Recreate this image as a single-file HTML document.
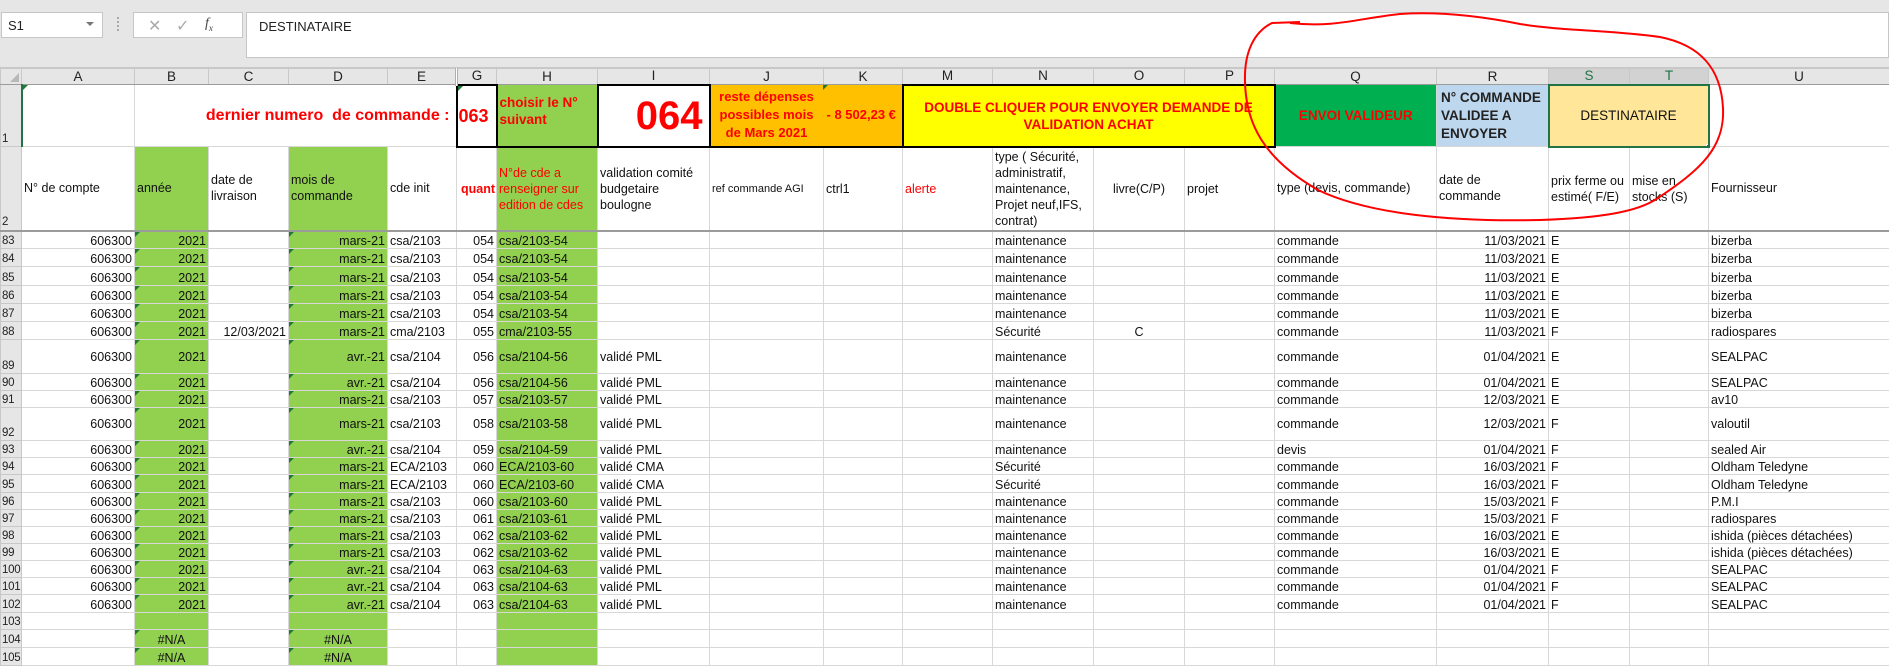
<!DOCTYPE html>
<html><head><meta charset="utf-8">
<style>
*{box-sizing:border-box}
body{margin:0;width:1889px;height:660px;overflow:hidden;background:#fff;font-family:"Liberation Sans",Arial,sans-serif;position:relative}
#top{position:absolute;left:0;top:0;width:1889px;height:68px;background:#e6e6e6;border-bottom:1px solid #c8c8c8}
#nb{position:absolute;left:1px;top:12px;width:102px;height:26px;background:#fff;border:1px solid #c6c6c6;font-size:13px;padding:5px 6px;color:#222}
#nb span{position:absolute;right:8px;top:9px;width:0;height:0;border-left:4px solid transparent;border-right:4px solid transparent;border-top:4px solid #777}
#dots{position:absolute;left:117px;top:17px;width:2px;height:14px;border-left:2px dotted #aaa}
#btn{position:absolute;left:133px;top:12px;width:110px;height:26px;background:#fff;border:1px solid #c6c6c6;color:#aaa;font-size:16px}
#fx{position:absolute;left:246px;top:12px;right:0;height:46px;background:#fff;border:1px solid #c6c6c6;font-size:13px;padding:6px 12px;color:#222}
table{position:absolute;left:0;top:68px;border-collapse:collapse;table-layout:fixed;width:1889px}
td{border:1px solid #d8d8d8;padding:0 2px;font-size:12.5px;white-space:nowrap;overflow:hidden;vertical-align:bottom;color:#111;position:relative;line-height:14px}
tr.ch td{background:#e6e6e6;text-align:center;font-size:13.5px;color:#222;vertical-align:middle;border-color:#c8c8c8;border-bottom:1px solid #9b9b9b}
td.rh{background:#e6e6e6;color:#222;font-size:11.5px;padding:0 1px;border-color:#c8c8c8;letter-spacing:-0.3px}
.r{text-align:right}.c{text-align:center}
.g{background:#92d050}
.t::before{content:"";position:absolute;left:0;top:0;border-top:5px solid #1e7b34;border-right:5px solid transparent}
.red{color:#f00}
.b{font-weight:bold}
tr.h2 td{vertical-align:middle;white-space:normal;line-height:16px;border-bottom:2px solid #9b9b9b}
tr.h2 td.rh{vertical-align:bottom}
tr.m td{vertical-align:middle}
tr.m td.rh{vertical-align:bottom}
</style></head><body>
<div id="top">
<div id="nb">S1<span></span></div>
<div id="dots"></div>
<div id="btn"><span style="position:absolute;left:14px;top:3px">✕</span><span style="position:absolute;left:42px;top:3px">✓</span><span style="position:absolute;left:71px;top:3px;color:#444;font-family:'Liberation Serif',serif;font-style:italic;font-size:14px">f<sub style="font-size:9px">x</sub></span></div>
<div id="fx">DESTINATAIRE</div>
</div>
<table>
<colgroup><col style="width:21px"><col style="width:113px"><col style="width:74px"><col style="width:80px"><col style="width:99px"><col style="width:69px"><col style="width:40px"><col style="width:101px"><col style="width:112px"><col style="width:114px"><col style="width:79px"><col style="width:90px"><col style="width:101px"><col style="width:91px"><col style="width:90px"><col style="width:162px"><col style="width:112px"><col style="width:81px"><col style="width:79px"><col style="width:181px"></colgroup>
<tr class="ch" style="height:16px"><td style="position:relative"><span style="position:absolute;right:2px;bottom:2px;border-bottom:9px solid #b8b8b8;border-left:9px solid transparent"></span></td><td>A</td><td>B</td><td>C</td><td>D</td><td style="border-right:3px double #b0b0b0">E</td><td>G</td><td>H</td><td>I</td><td>J</td><td>K</td><td>M</td><td>N</td><td>O</td><td>P</td><td>Q</td><td>R</td><td style="background:#d2d2d2;color:#217346">S</td><td style="background:#d2d2d2;color:#217346">T</td><td>U</td></tr>
<tr style="height:62px"><td class="rh" style="border-right:2px solid #217346">1</td><td class="t"></td>
<td colspan="4" class="r red b" style="font-size:16px;vertical-align:middle;padding-right:6px;border-right:2px solid #000">dernier numero&nbsp; de commande :</td>
<td class="red b t" style="font-size:18px;vertical-align:middle;border:2px solid #000;padding:0 1px">063</td>
<td class="g red b" style="font-size:13.5px;white-space:normal;vertical-align:middle;line-height:17px;border-bottom:2px solid #000;padding:0 2px 8px">choisir le N° suivant</td>
<td class="r red b" style="font-size:40px;vertical-align:middle;border:2px solid #000;padding-right:6px">064</td>
<td colspan="2" class="red b" style="background:#ffc000;font-size:13px;border-bottom:2px solid #000;border-right:2px solid #000;line-height:18px"><div style="position:absolute;left:0;top:3px;width:112px;text-align:center">reste dépenses<br>possibles mois<br>de Mars 2021</div><div style="position:absolute;left:116px;top:21px">- 8 502,23 €</div><span style="position:absolute;left:112px;top:0;border-top:5px solid #1e7b34;border-right:5px solid transparent"></span></td>
<td colspan="4" class="red b c" style="background:#ffff00;font-size:13.5px;white-space:normal;vertical-align:middle;line-height:17px;border:2px solid #000;padding:0 10px">DOUBLE CLIQUER POUR ENVOYER DEMANDE DE VALIDATION ACHAT</td>
<td class="c red b" style="background:#00b050;font-size:13.5px;vertical-align:middle">ENVOI VALIDEUR</td>
<td class="b" style="background:#bdd7ee;font-size:13.5px;white-space:normal;vertical-align:middle;line-height:18px;color:#222;padding-left:4px">N° COMMANDE VALIDEE A ENVOYER</td>
<td colspan="2" class="c" style="background:#ffe699;font-size:13.5px;vertical-align:middle;border:2px solid #217346;color:#111">DESTINATAIRE<span style="position:absolute;right:-4px;bottom:-4px;width:6px;height:6px;background:#217346;border:1px solid #fff"></span></td>
<td></td></tr>
<tr class="h2" style="height:84px"><td class="rh">2</td><td>N° de compte</td><td class="g">année</td><td>date de<br>livraison</td><td class="g">mois de<br>commande</td><td>cde init</td><td class="red b r" style="padding:0 1px">quant</td><td class="g red">N°de cde a renseigner sur edition de cdes</td><td>validation comité budgetaire boulogne</td><td style="font-size:11px">ref commande AGI</td><td>ctrl1</td><td class="red">alerte</td><td>type ( Sécurité, administratif, maintenance, Projet neuf,IFS, contrat)</td><td class="c">livre(C/P)</td><td>projet</td><td>type (devis, commande)</td><td>date de<br>commande</td><td>prix ferme ou estimé( F/E)</td><td>mise en stocks (S)</td><td>Fournisseur</td></tr>
<tr style="height:18px"><td class="rh">83</td><td class="r">606300</td><td class="g r t">2021</td><td></td><td class="g r t">mars-21</td><td>csa/2103</td><td class="r">054</td><td class="g">csa/2103-54</td><td></td><td></td><td></td><td></td><td>maintenance</td><td></td><td></td><td>commande</td><td class="r">11/03/2021</td><td>E</td><td></td><td>bizerba</td></tr>
<tr style="height:18px"><td class="rh">84</td><td class="r">606300</td><td class="g r t">2021</td><td></td><td class="g r t">mars-21</td><td>csa/2103</td><td class="r">054</td><td class="g">csa/2103-54</td><td></td><td></td><td></td><td></td><td>maintenance</td><td></td><td></td><td>commande</td><td class="r">11/03/2021</td><td>E</td><td></td><td>bizerba</td></tr>
<tr style="height:19px"><td class="rh">85</td><td class="r">606300</td><td class="g r t">2021</td><td></td><td class="g r t">mars-21</td><td>csa/2103</td><td class="r">054</td><td class="g">csa/2103-54</td><td></td><td></td><td></td><td></td><td>maintenance</td><td></td><td></td><td>commande</td><td class="r">11/03/2021</td><td>E</td><td></td><td>bizerba</td></tr>
<tr style="height:18px"><td class="rh">86</td><td class="r">606300</td><td class="g r t">2021</td><td></td><td class="g r t">mars-21</td><td>csa/2103</td><td class="r">054</td><td class="g">csa/2103-54</td><td></td><td></td><td></td><td></td><td>maintenance</td><td></td><td></td><td>commande</td><td class="r">11/03/2021</td><td>E</td><td></td><td>bizerba</td></tr>
<tr style="height:18px"><td class="rh">87</td><td class="r">606300</td><td class="g r t">2021</td><td></td><td class="g r t">mars-21</td><td>csa/2103</td><td class="r">054</td><td class="g">csa/2103-54</td><td></td><td></td><td></td><td></td><td>maintenance</td><td></td><td></td><td>commande</td><td class="r">11/03/2021</td><td>E</td><td></td><td>bizerba</td></tr>
<tr style="height:18px"><td class="rh">88</td><td class="r">606300</td><td class="g r t">2021</td><td class="r">12/03/2021</td><td class="g r t">mars-21</td><td>cma/2103</td><td class="r">055</td><td class="g">cma/2103-55</td><td></td><td></td><td></td><td></td><td>Sécurité</td><td class="c">C</td><td></td><td>commande</td><td class="r">11/03/2021</td><td>F</td><td></td><td>radiospares</td></tr>
<tr class="m" style="height:34px"><td class="rh">89</td><td class="r">606300</td><td class="g r t">2021</td><td></td><td class="g r t">avr.-21</td><td>csa/2104</td><td class="r">056</td><td class="g">csa/2104-56</td><td>validé PML</td><td></td><td></td><td></td><td>maintenance</td><td></td><td></td><td>commande</td><td class="r">01/04/2021</td><td>E</td><td></td><td>SEALPAC</td></tr>
<tr style="height:17px"><td class="rh">90</td><td class="r">606300</td><td class="g r t">2021</td><td></td><td class="g r t">avr.-21</td><td>csa/2104</td><td class="r">056</td><td class="g">csa/2104-56</td><td>validé PML</td><td></td><td></td><td></td><td>maintenance</td><td></td><td></td><td>commande</td><td class="r">01/04/2021</td><td>E</td><td></td><td>SEALPAC</td></tr>
<tr style="height:17px"><td class="rh">91</td><td class="r">606300</td><td class="g r t">2021</td><td></td><td class="g r t">mars-21</td><td>csa/2103</td><td class="r">057</td><td class="g">csa/2103-57</td><td>validé PML</td><td></td><td></td><td></td><td>maintenance</td><td></td><td></td><td>commande</td><td class="r">12/03/2021</td><td>E</td><td></td><td>av10</td></tr>
<tr class="m" style="height:33px"><td class="rh">92</td><td class="r">606300</td><td class="g r t">2021</td><td></td><td class="g r t">mars-21</td><td>csa/2103</td><td class="r">058</td><td class="g">csa/2103-58</td><td>validé PML</td><td></td><td></td><td></td><td>maintenance</td><td></td><td></td><td>commande</td><td class="r">12/03/2021</td><td>F</td><td></td><td>valoutil</td></tr>
<tr style="height:17px"><td class="rh">93</td><td class="r">606300</td><td class="g r t">2021</td><td></td><td class="g r t">avr.-21</td><td>csa/2104</td><td class="r">059</td><td class="g">csa/2104-59</td><td>validé PML</td><td></td><td></td><td></td><td>maintenance</td><td></td><td></td><td>devis</td><td class="r">01/04/2021</td><td>F</td><td></td><td>sealed Air</td></tr>
<tr style="height:17px"><td class="rh">94</td><td class="r">606300</td><td class="g r t">2021</td><td></td><td class="g r t">mars-21</td><td>ECA/2103</td><td class="r">060</td><td class="g">ECA/2103-60</td><td>validé CMA</td><td></td><td></td><td></td><td>Sécurité</td><td></td><td></td><td>commande</td><td class="r">16/03/2021</td><td>F</td><td></td><td>Oldham Teledyne</td></tr>
<tr style="height:18px"><td class="rh">95</td><td class="r">606300</td><td class="g r t">2021</td><td></td><td class="g r t">mars-21</td><td>ECA/2103</td><td class="r">060</td><td class="g">ECA/2103-60</td><td>validé CMA</td><td></td><td></td><td></td><td>Sécurité</td><td></td><td></td><td>commande</td><td class="r">16/03/2021</td><td>F</td><td></td><td>Oldham Teledyne</td></tr>
<tr style="height:17px"><td class="rh">96</td><td class="r">606300</td><td class="g r t">2021</td><td></td><td class="g r t">mars-21</td><td>csa/2103</td><td class="r">060</td><td class="g">csa/2103-60</td><td>validé PML</td><td></td><td></td><td></td><td>maintenance</td><td></td><td></td><td>commande</td><td class="r">15/03/2021</td><td>F</td><td></td><td>P.M.I</td></tr>
<tr style="height:17px"><td class="rh">97</td><td class="r">606300</td><td class="g r t">2021</td><td></td><td class="g r t">mars-21</td><td>csa/2103</td><td class="r">061</td><td class="g">csa/2103-61</td><td>validé PML</td><td></td><td></td><td></td><td>maintenance</td><td></td><td></td><td>commande</td><td class="r">15/03/2021</td><td>F</td><td></td><td>radiospares</td></tr>
<tr style="height:17px"><td class="rh">98</td><td class="r">606300</td><td class="g r t">2021</td><td></td><td class="g r t">mars-21</td><td>csa/2103</td><td class="r">062</td><td class="g">csa/2103-62</td><td>validé PML</td><td></td><td></td><td></td><td>maintenance</td><td></td><td></td><td>commande</td><td class="r">16/03/2021</td><td>E</td><td></td><td>ishida (pièces détachées)</td></tr>
<tr style="height:17px"><td class="rh">99</td><td class="r">606300</td><td class="g r t">2021</td><td></td><td class="g r t">mars-21</td><td>csa/2103</td><td class="r">062</td><td class="g">csa/2103-62</td><td>validé PML</td><td></td><td></td><td></td><td>maintenance</td><td></td><td></td><td>commande</td><td class="r">16/03/2021</td><td>E</td><td></td><td>ishida (pièces détachées)</td></tr>
<tr style="height:17px"><td class="rh">100</td><td class="r">606300</td><td class="g r t">2021</td><td></td><td class="g r t">avr.-21</td><td>csa/2104</td><td class="r">063</td><td class="g">csa/2104-63</td><td>validé PML</td><td></td><td></td><td></td><td>maintenance</td><td></td><td></td><td>commande</td><td class="r">01/04/2021</td><td>F</td><td></td><td>SEALPAC</td></tr>
<tr style="height:17px"><td class="rh">101</td><td class="r">606300</td><td class="g r t">2021</td><td></td><td class="g r t">avr.-21</td><td>csa/2104</td><td class="r">063</td><td class="g">csa/2104-63</td><td>validé PML</td><td></td><td></td><td></td><td>maintenance</td><td></td><td></td><td>commande</td><td class="r">01/04/2021</td><td>F</td><td></td><td>SEALPAC</td></tr>
<tr style="height:18px"><td class="rh">102</td><td class="r">606300</td><td class="g r t">2021</td><td></td><td class="g r t">avr.-21</td><td>csa/2104</td><td class="r">063</td><td class="g">csa/2104-63</td><td>validé PML</td><td></td><td></td><td></td><td>maintenance</td><td></td><td></td><td>commande</td><td class="r">01/04/2021</td><td>F</td><td></td><td>SEALPAC</td></tr>
<tr style="height:17px"><td class="rh">103</td><td></td><td class="g"></td><td></td><td class="g"></td><td></td><td></td><td class="g"></td><td></td><td></td><td></td><td></td><td></td><td></td><td></td><td></td><td></td><td></td><td></td><td></td></tr>
<tr style="height:18px"><td class="rh">104</td><td></td><td class="g c t">#N/A</td><td></td><td class="g c t">#N/A</td><td></td><td></td><td class="g"></td><td></td><td></td><td></td><td></td><td></td><td></td><td></td><td></td><td></td><td></td><td></td><td></td></tr>
<tr style="height:18px"><td class="rh">105</td><td></td><td class="g c t">#N/A</td><td></td><td class="g c t">#N/A</td><td></td><td></td><td class="g"></td><td></td><td></td><td></td><td></td><td></td><td></td><td></td><td></td><td></td><td></td><td></td><td></td></tr>
</table>
<svg width="1889" height="660" style="position:absolute;left:0;top:0;pointer-events:none">
<path d="M1300,22 L1272,23 C1254,32 1244,52 1245,82 C1246,122 1262,158 1318,190 C1368,214 1450,222 1540,220 C1600,218 1638,212 1658,198 C1700,170 1725,148 1723,108 C1721,68 1700,45 1660,37 C1612,30 1562,31 1520,24 C1470,14 1430,12 1400,14 C1360,18 1335,28 1290,23" fill="none" stroke="#f00" stroke-width="2"/>
</svg>
</body></html>
